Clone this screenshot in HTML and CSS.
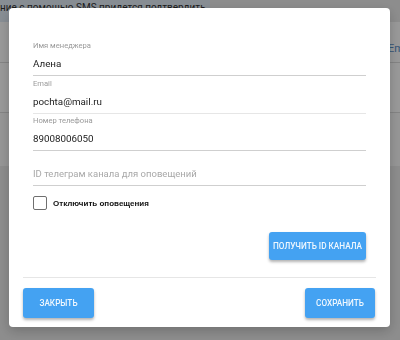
FILE: index.html
```html
<!DOCTYPE html>
<html>

<head>
  <meta charset="utf-8">

  <title>Настройки менеджера</title>

  <link rel="stylesheet" href="styles.css">
</head>

<body>
  <div class="page">
    <div class="notice">ние с помощью SMS придется подтвердить</div>
    <div class="row">
      <span></span>
      <a class="link">Email</a>
    </div>
    <div class="row"></div>
    <div class="row light"></div>
  </div>

  <div class="overlay">
    <div class="modal">
      <div class="modal-body">
        <div class="field">
          <label class="field-label">Имя менеджера</label>
          <div class="field-input">Алена</div>
        </div>
        <div class="field">
          <label class="field-label">Email</label>
          <div class="field-input faint">pochta@mail.ru</div>
        </div>
        <div class="field">
          <label class="field-label">Номер телефона</label>
          <div class="field-input">89008006050</div>
        </div>
        <div class="field tg">
          <div class="field-input placeholder">ID телеграм канала для оповещений</div>
        </div>

        <label class="check">
          <span class="check-box"></span>
          <span class="check-text">Отключить оповещения</span>
        </label>

        <div class="actions">
          <button class="btn btn-wide">Получить ID канала</button>
        </div>
      </div>

      <div class="modal-footer">
        <button class="btn btn-close">Закрыть</button>
        <button class="btn btn-save">Сохранить</button>
      </div>
    </div>
  </div>
</body>

</html>
```

FILE: styles.css
```css
* {
  box-sizing: border-box;
}

body {
  margin: 0;
  width: 400px;
  height: 340px;
  overflow: hidden;
  background-color: #ebebeb;
  font-family: Roboto, "Liberation Sans", sans-serif;
}

/* page behind the dialog */
.notice {
  width: 210px;
  height: 22px;
  padding-left: 0;
  background-color: #e2ecf6;
  color: #333;
  font-size: 10px;
  line-height: 16px;
  white-space: nowrap;
}

.row {
  display: grid;
  grid-template-columns: 388px 1fr;
  align-items: center;
  height: 41px;
  background-color: #fff;
  border-bottom: 1px solid #dcdcdc;
  overflow: hidden;
}

.row:nth-child(3) {
  height: 50px;
}

.row.light {
  height: 53px;
  background-color: #fafafa;
  border-bottom: none;
}

.link {
  padding-top: 12px;
  color: #5c8fc7;
  font-size: 11px;
  white-space: nowrap;
}

/* dialog */
.overlay {
  position: fixed;
  top: 0;
  left: 0;
  width: 400px;
  height: 340px;
  padding: 8px 0 0 9px;
  background-color: rgba(0, 0, 0, 0.4);
}

.modal {
  width: 381px;
  background-color: #fff;
  border-radius: 4px;
  box-shadow: 0 4px 12px rgba(0, 0, 0, 0.2);
}

.modal-body {
  padding: 33px 24px 0;
}

.field {
  margin-bottom: 2.5px;
}

.field-label {
  display: block;
  height: 10px;
  font-size: 7.6px;
  line-height: 10px;
  color: #9a9a9a;
}

.field-input {
  height: 25px;
  padding-top: 2px;
  border-bottom: 1px solid #cfcfcf;
  font-size: 9.8px;
  line-height: 22px;
  color: #222;
}

.field-input.faint {
  border-bottom-color: #e6e6e6;
}

.field.tg {
  margin-top: 10px;
}

.field-input.placeholder {
  font-size: 9.5px;
  color: #a8a8a8;
}

.check {
  display: flex;
  align-items: center;
  gap: 6px;
  margin-top: 10px;
  height: 14px;
}

.check-box {
  width: 14px;
  height: 14px;
  border: 1.5px solid #6f6f6f;
  border-radius: 2px;
}

.check-text {
  font-family: "Liberation Sans", Arial, sans-serif;
  font-weight: bold;
  font-size: 8px;
  color: #111;
}

.actions {
  display: flex;
  justify-content: flex-end;
  margin-top: 22px;
  padding-bottom: 17px;
}

.btn {
  border: none;
  border-radius: 3px;
  background-color: #44a2f2;
  color: rgba(255, 255, 255, 0.92);
  font-family: Roboto, sans-serif;
  font-weight: 500;
  font-size: 8.2px;
  text-transform: uppercase;
  box-shadow: 0 2px 3px rgba(0, 0, 0, 0.3);
  padding: 0;
}

.btn-wide {
  width: 97px;
  height: 28px;
}

.modal-footer {
  display: flex;
  justify-content: space-between;
  margin: 0 14px;
  padding: 10px 1px 9px 0;
  border-top: 1px solid #e6e6e6;
}

.btn-close {
  width: 71px;
  height: 30px;
}

.btn-save {
  width: 70px;
  height: 30px;
}
```
